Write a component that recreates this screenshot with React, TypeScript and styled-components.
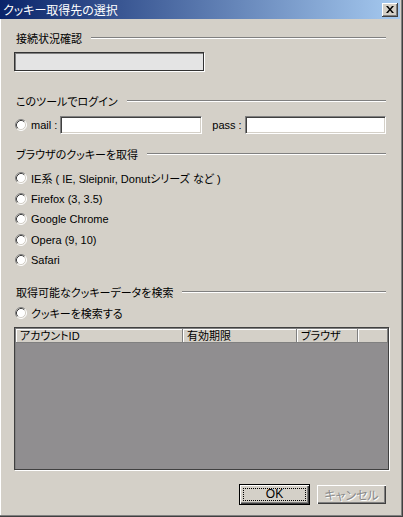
import React from 'react'
import styled, { createGlobalStyle } from 'styled-components'

const FACE = '#d4d0c8'

const GlobalStyle = createGlobalStyle`
  html, body {
    margin: 0;
    padding: 0;
    background: ${FACE};
  }
  body {
    font-family: "Liberation Sans", "Noto Sans CJK JP", sans-serif;
    font-size: 11px;
    color: #000;
    font-feature-settings: "palt";
  }
`

const Window = styled.div`
  width: 403px;
  height: 517px;
  box-sizing: border-box;
  display: flex;
  flex-direction: column;
  background: ${FACE};
  border-right: 1px solid #404040;
  border-bottom: 1px solid #404040;
  box-shadow: inset -1px -1px #808080, inset 1px 0 #fff;
  overflow: hidden;
`

const TitleBar = styled.div`
  height: 19px;
  margin-right: 2px;
  display: flex;
  align-items: center;
  justify-content: space-between;
  background: linear-gradient(to right, #0a246a, #a6caf0);
  color: #fff;
  font-size: 12px;
  padding-left: 3px;
`

const CloseButton = styled.div`
  width: 16px;
  height: 14px;
  margin-right: 2px;
  display: flex;
  align-items: center;
  justify-content: center;
  background: ${FACE};
  box-shadow: inset -1px -1px #404040, inset 1px 1px #fff, inset -2px -2px #808080;
`

const Body = styled.div`
  flex: 1;
  display: flex;
  flex-direction: column;
  padding: 12px 13px 0 14px;
`

const GroupTitle = styled.div<{ $mt: number }>`
  display: flex;
  align-items: center;
  height: 14px;
  margin-top: ${(p) => p.$mt}px;
  padding-left: 2px;
  white-space: nowrap;

  &::after {
    content: '';
    flex: 1;
    height: 0;
    margin: 0 3px 0 9px;
    border-top: 1px solid #808080;
    border-bottom: 1px solid #fff;
  }
`

const StatusBox = styled.div`
  width: 190px;
  height: 19px;
  margin-top: 7px;
  box-sizing: border-box;
  background: #e4e4e4;
  border: 1px solid #333;
  box-shadow: 1px 1px 0 #fff, inset 1px 1px #808080;
`

const LoginRow = styled.div`
  display: flex;
  align-items: center;
  height: 18px;
  margin-top: 8px;
`

const Option = styled.label<{ $h?: number }>`
  display: flex;
  align-items: center;
  gap: 4px;
  height: ${(p) => p.$h ?? 20}px;
  padding-left: 1px;
  white-space: nowrap;
`

const FieldLabel = styled.span<{ $ml?: number }>`
  margin-left: ${(p) => p.$ml ?? 0}px;
  margin-right: 3px;
  white-space: nowrap;
`

const TextBox = styled.div<{ $w?: number; $ml?: number }>`
  ${(p) => (p.$w ? `width: ${p.$w}px;` : 'flex: 1; margin-right: 3px;')}
  margin-left: ${(p) => p.$ml ?? 0}px;
  height: 18px;
  box-sizing: border-box;
  background: #fff;
  border-style: solid;
  border-width: 1px;
  border-color: #808080 #fff #fff #808080;
  box-shadow: inset 1px 1px #404040, inset -1px -1px ${FACE};
`

const OptionList = styled.div`
  display: flex;
  flex-direction: column;
  margin-top: 7px;

  & > label {
    height: 20.5px;
  }
`

const SearchOption = styled(Option)`
  margin-top: 4px;
`

const ListView = styled.div`
  height: 143px;
  margin-top: 4px;
  box-sizing: border-box;
  display: flex;
  flex-direction: column;
  border: 1px solid #404040;
  padding: 1px 0 0 1px;
  box-shadow: 1px 1px 0 #fff, inset 1px 1px #808080;
  background: #908e90;
`

const ListHeader = styled.div`
  display: flex;
  height: 14px;
  background: ${FACE};
`

const HeaderCell = styled.div<{ $w?: number }>`
  ${(p) => (p.$w ? `width: ${p.$w}px;` : 'flex: 1;')}
  box-sizing: border-box;
  padding-left: 4px;
  line-height: 14px;
  white-space: nowrap;
  box-shadow: inset -1px -1px #808080, inset 1px 1px #fff;
`

const ButtonRow = styled.div`
  display: flex;
  justify-content: flex-end;
  gap: 6px;
  margin-top: 14px;
  padding-right: 2px;
`

const Button = styled.div<{ $default?: boolean; $disabled?: boolean }>`
  width: 71px;
  height: 21px;
  box-sizing: border-box;
  display: flex;
  padding: 3px;
  background: ${FACE};
  font-size: 12px;
  border: 1px solid ${(p) => (p.$default ? '#000' : FACE)};
  box-shadow: inset 1px 1px #fff, inset -1px -1px #404040, inset -2px -2px #808080;
  color: ${(p) => (p.$disabled ? '#8a8a8a' : '#000')};
  text-shadow: ${(p) => (p.$disabled ? '1px 1px 0 #fff' : 'none')};
`

const ButtonFace = styled.span<{ $focus?: boolean }>`
  flex: 1;
  display: flex;
  align-items: center;
  justify-content: center;
  border: 1px dotted ${(p) => (p.$focus ? '#000' : 'transparent')};
`

const Radio = () => (
  <svg width="12" height="12" viewBox="0 0 12 12">
    <circle cx="6" cy="6" r="5" fill="#fff" />
    <path d="M2.11 9.89A5.5 5.5 0 0 1 9.89 2.11" fill="none" stroke="#808080" />
    <path d="M9.89 2.11A5.5 5.5 0 0 1 2.11 9.89" fill="none" stroke="#fff" />
    <path d="M2.82 9.18A4.5 4.5 0 0 1 9.18 2.82" fill="none" stroke="#404040" />
    <path d="M9.18 2.82A4.5 4.5 0 0 1 2.82 9.18" fill="none" stroke={FACE} />
  </svg>
)

const browsers = [
  'IE系 ( IE, Sleipnir, Donutシリーズ など )',
  'Firefox (3, 3.5)',
  'Google Chrome',
  'Opera (9, 10)',
  'Safari',
]

const App = () => {
  return (
    <>
      <GlobalStyle />
      <Window>
        <TitleBar>
          <span>クッキー取得先の選択</span>
          <CloseButton>
            <svg width="8" height="7" viewBox="0 0 8 7">
              <path d="M0 0h2l2 2.5L6 0h2L5 3.5L8 7H6L4 4.5L2 7H0l3-3.5z" fill="#000" />
            </svg>
          </CloseButton>
        </TitleBar>
        <Body>
          <GroupTitle $mt={0}>接続状況確認</GroupTitle>
          <StatusBox />

          <GroupTitle $mt={23}>このツールでログイン</GroupTitle>
          <LoginRow>
            <Option $h={18}>
              <Radio />
              <span>mail :</span>
            </Option>
            <TextBox $w={142} $ml={3} />
            <FieldLabel $ml={10}>pass :</FieldLabel>
            <TextBox />
          </LoginRow>

          <GroupTitle $mt={13}>ブラウザのクッキーを取得</GroupTitle>
          <OptionList>
            {browsers.map((b) => (
              <Option key={b}>
                <Radio />
                <span>{b}</span>
              </Option>
            ))}
          </OptionList>

          <GroupTitle $mt={14}>取得可能なクッキーデータを検索</GroupTitle>
          <SearchOption>
            <Radio />
            <span>クッキーを検索する</span>
          </SearchOption>

          <ListView>
            <ListHeader>
              <HeaderCell $w={167}>アカウントID</HeaderCell>
              <HeaderCell $w={114}>有効期限</HeaderCell>
              <HeaderCell $w={61}>ブラウザ</HeaderCell>
              <HeaderCell />
            </ListHeader>
          </ListView>

          <ButtonRow>
            <Button $default>
              <ButtonFace $focus>OK</ButtonFace>
            </Button>
            <Button $disabled>
              <ButtonFace>キャンセル</ButtonFace>
            </Button>
          </ButtonRow>
        </Body>
      </Window>
    </>
  )
}

export default App
